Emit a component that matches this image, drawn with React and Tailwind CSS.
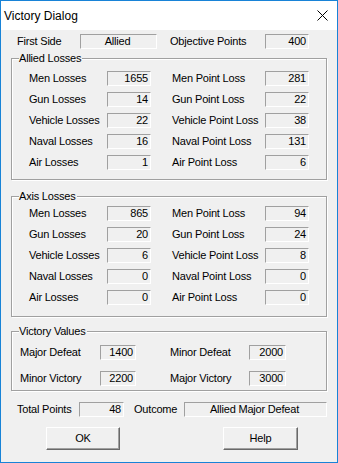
import React from 'react';

const font = { fontFamily: '"Liberation Sans", Arial, sans-serif' };

const Field = ({ value, w, align = 'right' }) => (
    <div
        className={`h-[15px] flex items-center border-t border-l border-[#a0a0a0] border-b-white border-r-white border-b border-r bg-[#f0f0f0] pr-[2px] leading-none ${align === 'center' ? 'justify-center' : 'justify-end'}`}
        style={{ width: w }}
    >
        {value}
    </div>
);

const Group = ({ title, className, children }) => (
    <div className={`relative mx-[10px] border border-[#a0a0a0] shadow-[inset_1px_1px_0_#ffffff,1px_1px_0_#ffffff] ${className}`}>
        <span className="absolute -top-[6px] left-[7px] bg-[#f0f0f0] pr-[1px] leading-none">{title}</span>
        {children}
    </div>
);

const LossRow = ({ left, lv, right, rv }) => (
    <div className="flex items-center h-[15px]">
        <span className="w-[78px]">{left}</span>
        <Field value={lv} w={44} />
        <span className="ml-[21px] w-[93px]">{right}</span>
        <Field value={rv} w={44} />
    </div>
);

const Btn = ({ children, w }) => (
    <button
        className="h-[23px] flex items-center justify-center bg-[#f0f0f0] border-t border-l border-white border-b border-r border-b-[#696969] border-r-[#696969] shadow-[inset_-1px_-1px_0_#a0a0a0]"
        style={{ width: w }}
    >
        {children}
    </button>
);

const allied = [
    ['Men Losses', 1655, 'Men Point Loss', 281],
    ['Gun Losses', 14, 'Gun Point Loss', 22],
    ['Vehicle Losses', 22, 'Vehicle Point Loss', 38],
    ['Naval Losses', 16, 'Naval Point Loss', 131],
    ['Air Losses', 1, 'Air Point Loss', 6],
];

const axis = [
    ['Men Losses', 865, 'Men Point Loss', 94],
    ['Gun Losses', 20, 'Gun Point Loss', 24],
    ['Vehicle Losses', 6, 'Vehicle Point Loss', 8],
    ['Naval Losses', 0, 'Naval Point Loss', 0],
    ['Air Losses', 0, 'Air Point Loss', 0],
];

export default function App() {
    return (
        <div className="w-[338px] h-[463px] border border-[#1883d7] bg-[#f0f0f0] flex flex-col text-[11px] tracking-[-0.2px] text-black" style={font}>
            {/* title bar */}
            <div className="h-[29px] bg-white flex items-center justify-between pl-[3px] pr-[9px] shrink-0 tracking-normal">
                <span className="text-[12px]">Victory Dialog</span>
                <svg width="11" height="11" viewBox="0 0 11 11">
                    <path d="M0.5 0.5 L10.5 10.5 M10.5 0.5 L0.5 10.5" stroke="#000" strokeWidth="1" />
                </svg>
            </div>

            {/* first side */}
            <div className="flex items-center h-[15px] mt-[4px] pl-[16px]">
                <span className="w-[63px]">First Side</span>
                <Field value="Allied" w={77} align="center" />
                <span className="ml-[13px] w-[95px]">Objective Points</span>
                <Field value={400} w={44} />
            </div>

            <Group title="Allied Losses" className="mt-[9px] pt-[12px] pb-[9px] pl-[17px]">
                <div className="flex flex-col gap-[6px]">
                    {allied.map((r) => (
                        <LossRow key={r[0]} left={r[0]} lv={r[1]} right={r[2]} rv={r[3]} />
                    ))}
                </div>
            </Group>

            <Group title="Axis Losses" className="mt-[16px] pt-[9px] pb-[11px] pl-[17px]">
                <div className="flex flex-col gap-[6px]">
                    {axis.map((r) => (
                        <LossRow key={r[0]} left={r[0]} lv={r[1]} right={r[2]} rv={r[3]} />
                    ))}
                </div>
            </Group>

            <Group title="Victory Values" className="mt-[14px] pt-[13px] pb-[4px] pl-[8px]">
                <div className="flex flex-col gap-[11px]">
                    <div className="flex items-center h-[15px]">
                        <span className="w-[80px]">Major Defeat</span>
                        <Field value={1400} w={36} />
                        <span className="ml-[34px] w-[79px]">Minor Defeat</span>
                        <Field value={2000} w={37} />
                    </div>
                    <div className="flex items-center h-[15px]">
                        <span className="w-[80px]">Minor Victory</span>
                        <Field value={2200} w={36} />
                        <span className="ml-[34px] w-[79px]">Major Victory</span>
                        <Field value={3000} w={37} />
                    </div>
                </div>
            </Group>

            {/* totals */}
            <div className="flex items-center h-[15px] mt-[11px] pl-[16px]">
                <span className="w-[62px]">Total Points</span>
                <Field value={48} w={45} />
                <span className="ml-[10px] w-[50px]">Outcome</span>
                <Field value="Allied Major Defeat" w={143} align="center" />
            </div>

            {/* buttons */}
            <div className="flex items-center mt-[10px] pl-[45px]">
                <Btn w={74}>OK</Btn>
                <div className="ml-[103px]">
                    <Btn w={75}>Help</Btn>
                </div>
            </div>
        </div>
    );
}
